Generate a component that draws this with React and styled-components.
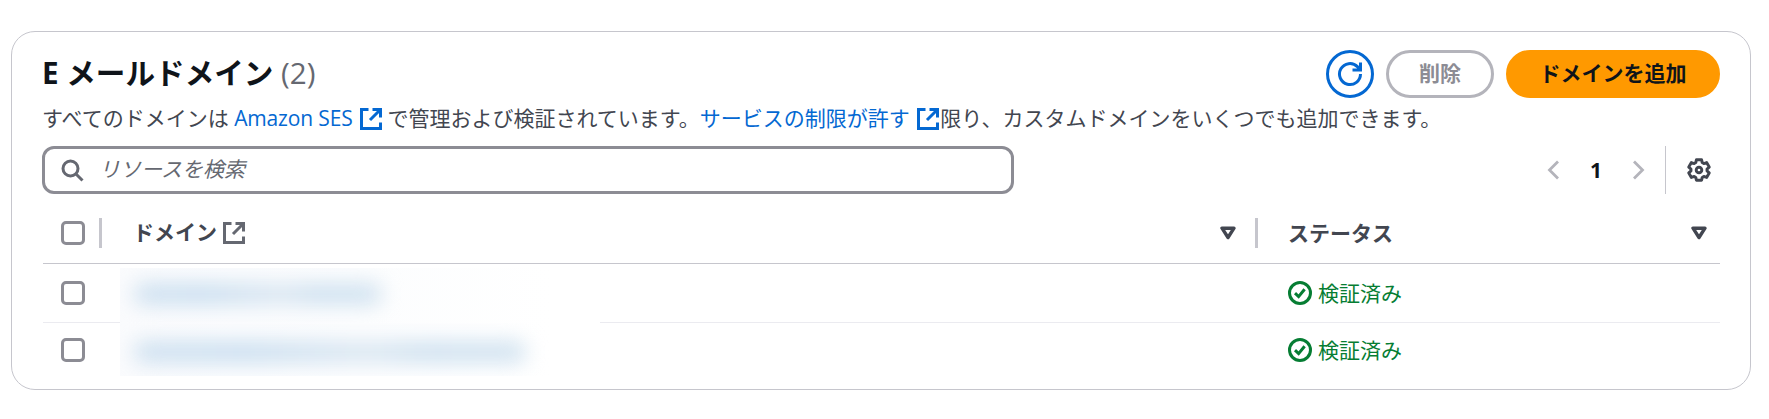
import React, { useState } from 'react';
import styled, { createGlobalStyle } from 'styled-components';

const GlobalStyle = createGlobalStyle`
    body{
        margin: 0;
        background: #ffffff;
        color: #424650;
        font-family: "Open Sans", "Noto Sans CJK JP", sans-serif;
        font-size: 21px;
        line-height: 30px;
    }
    *{
        box-sizing: border-box;
    }
`
const Container = styled.section`
    width: 1740px;
    height: 359px;
    margin: 31px 0 0 11px;
    padding: 18px 30px 0 31px;
    border: 1px solid #c6c6cd;
    border-radius: 24px;
    background: #ffffff;
`
const HeaderDiv = styled.div`
    display: flex;
    justify-content: space-between;
    height: 50px;
`
const Title = styled.h2`
    margin: 3px 0 0 -1px;
    font-size: 29.6px;
    line-height: 40px;
    font-weight: 700;
    color: #0f141a;
    white-space: nowrap;
`
const Count = styled.span`
    font-weight: 400;
    color: #656871;
`
const Actions = styled.div`
    display: flex;
    gap: 12px;
`
const Button = styled.button`
    display: flex;
    align-items: center;
    justify-content: center;
    width: ${props => props.$width}px;
    height: 48px;
    padding: 0 0 4px;
    border: 3px solid #0468d2;
    border-radius: 30px;
    background: #ffffff;
    color: #0468d2;
    font-family: inherit;
    font-size: 21px;
    font-weight: 700;
    &:disabled{
        border-color: #b4b4bb;
        color: #8c8c94;
    }
`
const IconButton = styled(Button)`
    padding: 0;
`
const PrimaryButton = styled(Button)`
    border-color: #ff9900;
    background: #ff9900;
    color: #0f141a;
`
const Description = styled.p`
    margin: 3px 0 0 -1px;
    height: 30px;
    white-space: nowrap;
    svg{
        margin-left: 2px;
        vertical-align: -4px;
    }
`
const Link = styled.a`
    margin-right: ${props => props.$right || 0}px;
    color: #0468d2;
    text-decoration: none;
`
const LatinText = styled.span`
    letter-spacing: -0.15px;
`
const ToolsDiv = styled.div`
    display: flex;
    justify-content: space-between;
    align-items: center;
    margin-top: 13px;
    height: 48px;
`
const SearchBox = styled.label`
    display: flex;
    align-items: center;
    gap: 15px;
    width: 972px;
    height: 48px;
    margin-left: -1px;
    padding-left: 16px;
    border: 3px solid #8c8c94;
    border-radius: 12px;
    color: #656871;
`
const SearchInput = styled.input`
    flex: 1;
    border: 0;
    outline: 0;
    padding: 0 0 2px;
    margin-right: 12px;
    background: transparent;
    font: inherit;
    &::placeholder{
        color: #656871;
        font-style: italic;
        opacity: 1;
    }
`
const Pagination = styled.div`
    display: flex;
    align-items: center;
    height: 48px;
    color: #b4b4bb;
`
const PageNumber = styled.span`
    width: 72px;
    text-align: center;
    font-weight: 700;
    color: #0f141a;
`
const Settings = styled.div`
    display: flex;
    align-items: center;
    height: 48px;
    margin-left: 20px;
    padding: 0 9px 0 21px;
    border-left: 1px solid #c6c6cd;
    color: #424650;
`
const Table = styled.div`
    margin-top: 9px;
`
const Row = styled.div`
    display: grid;
    grid-template-columns: 56px 1156px 1fr;
    align-items: center;
    height: ${props => props.$height}px;
    border-bottom: 1px solid ${props => props.$line};
`
const CheckCell = styled.div`
    padding-left: 18px;
`
const Checkbox = styled.input`
    appearance: none;
    display: block;
    width: 24px;
    height: 24px;
    margin: 0;
    border: 3px solid #8c8c94;
    border-radius: 5px;
    background: #ffffff;
    &:checked{
        border-color: #006ce0;
        background: #006ce0;
    }
`
const HeadCell = styled.div`
    display: flex;
    align-items: center;
    height: 30px;
    padding: 0 ${props => props.$right}px 0 ${props => props.$left}px;
    border-left: 3px solid #c6c6cd;
    font-weight: 700;
    svg:last-child{
        margin-left: auto;
    }
`
const HeadText = styled.span`
    margin-right: 6px;
    padding-bottom: ${props => props.$lift || 0}px;
`
const DomainCell = styled.div`
    align-self: stretch;
    width: 480px;
    margin: ${props => props.$margin};
    padding: ${props => props.$top}px 0 0 14px;
    overflow: hidden;
    background: linear-gradient(90deg, #fafbfd, #fcfdfe 50%, #ffffff 90%);
`
const HiddenName = styled.div`
    width: ${props => props.$width}px;
    height: 22px;
    border-radius: 10px;
    background: linear-gradient(90deg, #cfe1f0, #cbdff0 28%, #dbe7f1 60%, #cfe1f0 75%, #d2e3f0);
    filter: blur(10px);
`
const StatusCell = styled.div`
    display: flex;
    align-items: center;
    gap: 6px;
    padding-left: 33px;
    color: #067d33;
`

const ExternalIcon = ({ color = "currentColor" }) => (
    <svg width="22" height="22" viewBox="0 0 22 22" fill="none" stroke={color} strokeWidth="3">
        <path d="M8.5 1.5h-7v19h19v-6M12.5 1.5h8v8M20 2l-10 10" />
    </svg>
)
const RefreshIcon = () => (
    <svg width="26" height="26" viewBox="0 0 26 26" fill="none" stroke="currentColor" strokeWidth="3">
        <path d="M23.5 13a10.5 10.5 0 1 1-3.1-7.4l3.1 3.2M23.5 1.5v7.5h-8" />
    </svg>
)
const SearchIcon = () => (
    <svg width="23" height="23" viewBox="0 0 23 23" fill="none" stroke="currentColor" strokeWidth="3">
        <circle cx="9.5" cy="9.5" r="7.5" />
        <path d="M15 15l6.5 6.5" />
    </svg>
)
const ArrowIcon = ({ d }) => (
    <svg width="13" height="20" viewBox="0 0 13 20" fill="none" stroke="currentColor" strokeWidth="2.8">
        <path d={d} />
    </svg>
)
const GearIcon = () => (
    <svg width="24" height="24" viewBox="0 0 24 24" fill="none" stroke="currentColor" strokeWidth="2.9" strokeLinejoin="round">
        <path d="M9.4 1.7H14.600L15.200 4.600L16.810 5.530L19.620 4.600L22.220 9.100L20.010 11.070V12.930L22.220 14.900L19.620 19.400L16.810 18.470L15.200 19.400L14.600 22.300H9.400L8.800 19.400L7.190 18.470L4.380 19.400L1.780 14.900L3.990 12.930V11.070L1.780 9.100L4.380 4.600L7.190 5.530L8.800 4.600Z" />
        <circle cx="12" cy="12" r="2.8" />
    </svg>
)
const SortIcon = () => (
    <svg width="16" height="14" viewBox="0 0 16 14" fill="none" stroke="#424650" strokeWidth="3.4" strokeLinejoin="round">
        <path d="M2 2.2h12L8 11.5z" />
    </svg>
)
const CheckIcon = () => (
    <svg width="24" height="24" viewBox="0 0 24 24" fill="none" stroke="currentColor" strokeWidth="3">
        <circle cx="12" cy="12" r="10.5" />
        <path d="M7 12.2l3.6 3.4 6-7.4" />
    </svg>
)

const domains = [
    { id: 1, width: 248, height: 59, line: "#ebebf0", top: 15, margin: "4px 0 -1px 21px" },
    { id: 2, width: 392, height: 54, line: "transparent", top: 18, margin: "0 0 0 21px" },
]

const App = () => {
    const [selected, setSelected] = useState([])
    const toggle = id => {
        setSelected(selected.includes(id) ? selected.filter(s => s !== id) : [...selected, id])
    }
    const toggleAll = () => {
        setSelected(selected.length === domains.length ? [] : domains.map(d => d.id))
    }
    return (
        <>
        <GlobalStyle />
        <Container>
            <HeaderDiv>
                <Title>E メールドメイン <Count>({domains.length})</Count></Title>
                <Actions>
                    <IconButton $width={48} aria-label="更新"><RefreshIcon /></IconButton>
                    <Button $width={108} disabled={selected.length === 0}>削除</Button>
                    <PrimaryButton $width={214}>ドメインを追加</PrimaryButton>
                </Actions>
            </HeaderDiv>
            <Description>
                すべてのドメインは <Link><LatinText>Amazon SES</LatinText> <ExternalIcon /></Link> で管理および検証されています。<Link $right={1}>サービスの制限が許す <ExternalIcon /></Link>限り、カスタムドメインをいくつでも追加できます。
            </Description>
            <ToolsDiv>
                <SearchBox>
                    <SearchIcon />
                    <SearchInput placeholder="リソースを検索" />
                </SearchBox>
                <Pagination>
                    <ArrowIcon d="M11 1.5l-8.5 8.5 8.5 8.5" />
                    <PageNumber>1</PageNumber>
                    <ArrowIcon d="M2 1.5l8.5 8.5-8.5 8.5" />
                    <Settings><GearIcon /></Settings>
                </Pagination>
            </ToolsDiv>
            <Table>
                <Row $height={61} $line="#c6c6cd">
                    <CheckCell>
                        <Checkbox type="checkbox" checked={selected.length === domains.length} onChange={toggleAll} />
                    </CheckCell>
                    <HeadCell $left={31} $right={19}>
                        <HeadText $lift={3}>ドメイン</HeadText>
                        <ExternalIcon color="#656871" />
                        <SortIcon />
                    </HeadCell>
                    <HeadCell $left={30} $right={13}>
                        <HeadText $lift={1}>ステータス</HeadText>
                        <SortIcon />
                    </HeadCell>
                </Row>
                {domains.map(domain => (
                    <Row key={domain.id} $height={domain.height} $line={domain.line}>
                        <CheckCell>
                            <Checkbox type="checkbox" checked={selected.includes(domain.id)} onChange={() => toggle(domain.id)} />
                        </CheckCell>
                        <DomainCell $top={domain.top} $margin={domain.margin}>
                            <HiddenName $width={domain.width} />
                        </DomainCell>
                        <StatusCell><CheckIcon />検証済み</StatusCell>
                    </Row>
                ))}
            </Table>
        </Container>
        </>
    );
};

export default App;
